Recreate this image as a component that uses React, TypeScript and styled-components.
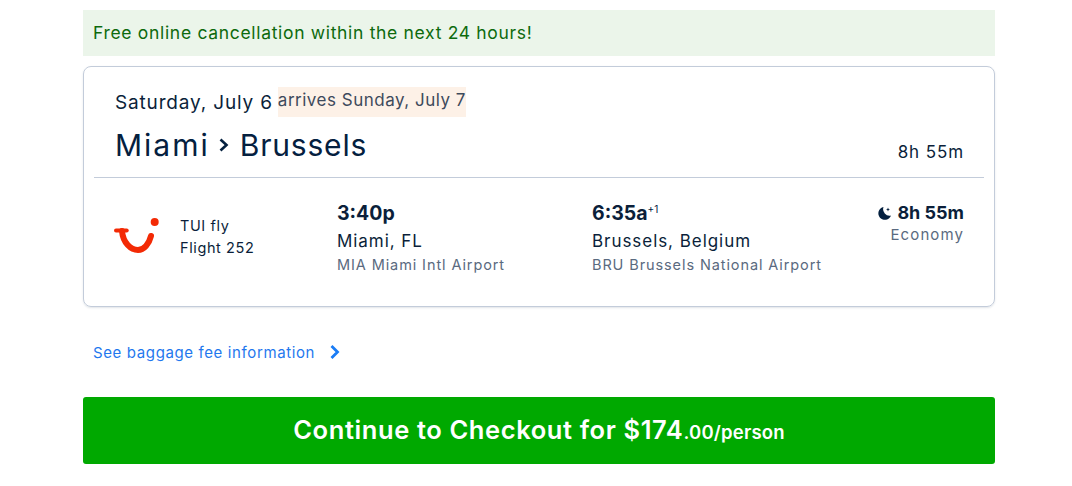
import React from 'react';
import styled, { createGlobalStyle } from 'styled-components';

const GlobalStyle = createGlobalStyle`
    html, body {
        margin: 0;
        padding: 0;
        background: #fff;
    }
    body {
        font-family: "Inter", "Open Sans", sans-serif;
        color: #0b1f3a;
    }
`

const Page = styled.div`
    width: 912px;
    margin-left: 83px;
    padding: 10px 0 22px;
`

const Banner = styled.div`
    height: 46px;
    box-sizing: border-box;
    padding: 0 0 2px 10px;
    display: flex;
    align-items: center;
    background: #ebf5ea;
    color: #0d6a0d;
    font-size: 17.5px;
    letter-spacing: 0.68px;
`

const Card = styled.div`
    margin-top: 10px;
    height: 241px;
    box-sizing: border-box;
    border: 1px solid #c3ccda;
    border-radius: 8px;
    box-shadow: 0 1px 2px rgba(60, 80, 110, 0.15);
    padding: 0 10px;
`

const Header = styled.div`
    padding: 20px 20px 0 21px;
    height: 111px;
    box-sizing: border-box;
    border-bottom: 1px solid #c3ccda;
`

const DateRow = styled.div`
    display: flex;
    align-items: center;
    height: 30px;
`

const DepartDate = styled.span`
    font-size: 19px;
    letter-spacing: 0.84px;
    margin-right: 5px;
`

const ArriveDate = styled.span`
    background: #fdf1e7;
    color: #3d4a5c;
    font-size: 17px;
    letter-spacing: 0.5px;
    line-height: 26px;
    padding-bottom: 4px;
`

const RouteRow = styled.div`
    display: flex;
    justify-content: space-between;
    align-items: flex-end;
    margin-top: 9px;
`

const Route = styled.div`
    display: flex;
    align-items: center;
    font-size: 30px;
    line-height: 38px;
    color: #04203f;
`

const RouteCity = styled.span<{ $spacing: number }>`
    letter-spacing: ${(props) => props.$spacing}px;
`

const RouteArrow = styled.svg`
    width: 12px;
    height: 16px;
    margin: 0 10px 0 8px;
`

const TotalTime = styled.span`
    font-size: 17px;
    letter-spacing: 0.9px;
    line-height: 24px;
`

const Segment = styled.div`
    display: grid;
    grid-template-columns: 223px 255px 1fr auto;
    padding: 22px 20px 0 20px;
`

const Airline = styled.div`
    display: flex;
    align-items: center;
    height: 74px;
`

const Logo = styled.svg`
    width: 46px;
    height: 40px;
    margin-right: 20px;
`

const AirlineText = styled.div`
    font-size: 14.5px;
    line-height: 22px;
    letter-spacing: 0.6px;
`

const Time = styled.div`
    font-size: 19.5px;
    font-weight: 700;
    line-height: 26px;
`

const Sup = styled.sup`
    font-size: 10px;
    font-weight: 400;
    line-height: 0;
    color: #04203f;
`

const City = styled.div`
    margin-top: 3px;
    font-size: 17px;
    letter-spacing: 0.95px;
    line-height: 24px;
`

const Airport = styled.div`
    margin-top: 1px;
    font-size: 14.5px;
    letter-spacing: 0.9px;
    line-height: 22px;
    color: #5a6a80;
`

const Duration = styled.div`
    text-align: right;
`

const DurationTime = styled.div`
    display: flex;
    justify-content: flex-end;
    align-items: center;
    gap: 5px;
    font-size: 18px;
    font-weight: 700;
    line-height: 26px;
`

const Cabin = styled.div`
    font-size: 15px;
    letter-spacing: 1.1px;
    line-height: 18px;
    color: #5a6a80;
`

const BaggageLink = styled.a`
    display: flex;
    align-items: center;
    height: 30px;
    margin-top: 30px;
    padding-left: 10px;
    color: #1f78ee;
    font-size: 15px;
    letter-spacing: 0.62px;
    text-decoration: none;
`

const LinkArrow = styled.svg`
    width: 12px;
    height: 16px;
    margin-left: 14px;
`

const CheckoutButton = styled.button`
    display: flex;
    justify-content: center;
    align-items: baseline;
    width: 100%;
    height: 67px;
    margin-top: 30px;
    padding: 17px 0 0;
    box-sizing: border-box;
    border: 0;
    border-radius: 3px;
    background: #00a900;
    color: #fff;
    font-family: inherit;
    font-size: 25.5px;
    font-weight: 600;
    letter-spacing: 0.6px;
    white-space: pre;
`

const Cents = styled.span`
    font-size: 18.5px;
    letter-spacing: 0.2px;
`

export default function App() {
    return (
        <>
            <GlobalStyle />
            <Page>
                <Banner>Free online cancellation within the next 24 hours!</Banner>
                <Card>
                    <Header>
                        <DateRow>
                            <DepartDate>Saturday, July 6</DepartDate>
                            <ArriveDate>arrives Sunday, July 7</ArriveDate>
                        </DateRow>
                        <RouteRow>
                            <Route>
                                <RouteCity $spacing={2}>Miami</RouteCity>
                                <RouteArrow viewBox="0 0 12 16">
                                    <path d="M2.5 2.5L8.5 8l-6 5.5" fill="none" stroke="#04203f" strokeWidth="2.6" />
                                </RouteArrow>
                                <RouteCity $spacing={0.8}>Brussels</RouteCity>
                            </Route>
                            <TotalTime>8h 55m</TotalTime>
                        </RouteRow>
                    </Header>
                    <Segment>
                        <Airline>
                            <Logo viewBox="0 0 46 40">
                                <path d="M2 13.6h10.7" stroke="#f32a05" strokeWidth="4" strokeLinecap="round" fill="none" />
                                <path d="M8 14c1 12 9 19 16 19 6 0 11-6 13-14" stroke="#f32a05" strokeWidth="6" strokeLinecap="round" fill="none" />
                                <circle cx="40.7" cy="5" r="4" fill="#f32a05" />
                            </Logo>
                            <AirlineText>
                                <div>TUI fly</div>
                                <div>Flight 252</div>
                            </AirlineText>
                        </Airline>
                        <div>
                            <Time>3:40p</Time>
                            <City>Miami, FL</City>
                            <Airport>MIA Miami Intl Airport</Airport>
                        </div>
                        <div>
                            <Time>6:35a<Sup>+1</Sup></Time>
                            <City>Brussels, Belgium</City>
                            <Airport>BRU Brussels National Airport</Airport>
                        </div>
                        <Duration>
                            <DurationTime>
                                <svg width="15" height="15" viewBox="0 0 15 15">
                                    <path d="M6.5 1a6.5 6.5 0 1 0 7.5 8.5A6.5 6.5 0 0 1 6.5 1z" fill="#04203f" />
                                    <path d="M11 1.5l.6 1.4L13 3.5l-1.4.6L11 5.5l-.6-1.4L9 3.5l1.4-.6z" fill="#04203f" />
                                </svg>
                                8h 55m
                            </DurationTime>
                            <Cabin>Economy</Cabin>
                        </Duration>
                    </Segment>
                </Card>
                <BaggageLink href="#">
                    See baggage fee information
                    <LinkArrow viewBox="0 0 12 16">
                        <path d="M2.5 2L8.5 8l-6 6" fill="none" stroke="#1a7cf5" strokeWidth="2.8" />
                    </LinkArrow>
                </BaggageLink>
                <CheckoutButton>
                    Continue to Checkout for $174<Cents>.00/person</Cents>
                </CheckoutButton>
            </Page>
        </>
    );
}
